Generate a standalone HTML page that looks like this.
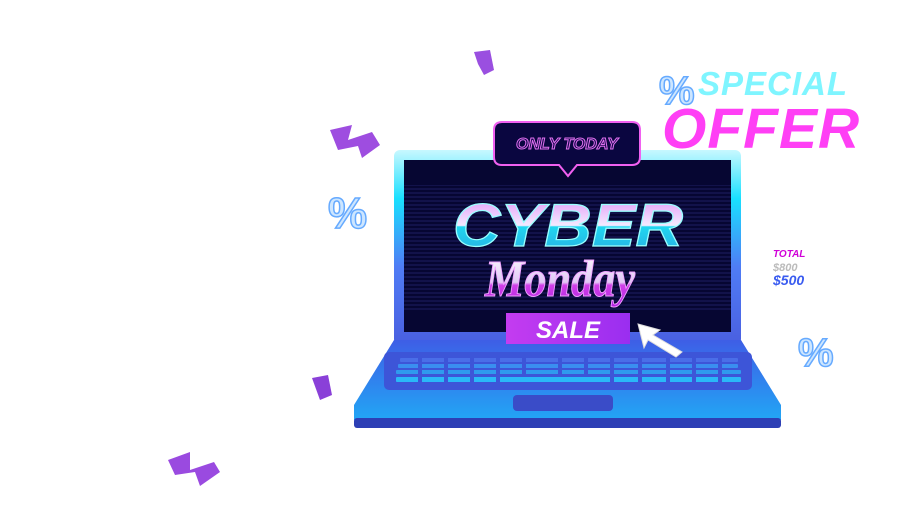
<!DOCTYPE html>
<html><head><meta charset="utf-8"><style>
body{margin:0;width:902px;height:507px;background:#fff;position:relative;overflow:hidden;font-family:"Liberation Sans",sans-serif}
.a{position:absolute}
</style></head><body>
<svg class="a" style="left:0;top:0" width="902" height="507">
<defs>
<linearGradient id="lid" x1="0" y1="0" x2="0" y2="1"><stop offset="0" stop-color="#c8f8ff"/><stop offset=".25" stop-color="#19e0ff"/><stop offset=".6" stop-color="#4f7cf5"/><stop offset="1" stop-color="#4a5fe0"/></linearGradient>
<linearGradient id="base" x1="0" y1="0" x2="0" y2="1"><stop offset="0" stop-color="#3e5ee6"/><stop offset="1" stop-color="#22a6f5"/></linearGradient>
<linearGradient id="cy" x1="0" y1="0" x2="0" y2="1"><stop offset="0" stop-color="#e08cf5"/><stop offset=".5" stop-color="#f3eaff"/><stop offset=".52" stop-color="#20d6f0"/><stop offset="1" stop-color="#2aa8e0"/></linearGradient>
<linearGradient id="mo" x1="0" y1="0" x2="0" y2="1"><stop offset="0" stop-color="#fff"/><stop offset=".55" stop-color="#e0c8f5"/><stop offset=".6" stop-color="#d040e8"/><stop offset="1" stop-color="#b020e0"/></linearGradient>
<linearGradient id="sale" x1="0" y1="0" x2="1" y2="0"><stop offset="0" stop-color="#c43cf0"/><stop offset="1" stop-color="#9a2ef0"/></linearGradient>
<pattern id="ln" width="4" height="4" patternUnits="userSpaceOnUse"><rect width="4" height="2" fill="#1a1a5a" opacity=".6"/></pattern>
</defs>
<rect x="394" y="150" width="347" height="195" rx="6" fill="url(#lid)"/>
<rect x="404" y="160" width="327" height="172" fill="#060632"/>
<rect x="404" y="185" width="327" height="125" fill="url(#ln)"/>
<path d="M394 340 L741 340 L781 405 L781 420 L354 420 L354 405 Z" fill="url(#base)"/>
<rect x="354" y="418" width="427" height="10" rx="3" fill="#2d3fb5"/>
<rect x="384" y="352" width="368" height="38" rx="5" fill="#3d55d8"/>
<g>
<rect x="400" y="358" width="338" height="4" rx="1" fill="#4a6ee8"/>
<rect x="398" y="364" width="340" height="4" rx="1" fill="#3a8ef0"/>
<rect x="396" y="370" width="345" height="4" rx="1" fill="#2ab8f8" opacity=".7"/>
<rect x="396" y="377" width="345" height="5" rx="1" fill="#2ab8f8"/>
</g>
<g stroke="#3d55d8" stroke-width="4">
<path d="M420 356V384M446 356V384M472 356V384M498 356V384M524 356V374M560 356V374M586 356V374M612 356V384M640 356V384M668 356V384M694 356V384M720 356V384"/>
</g>
<rect x="513" y="395" width="100" height="16" rx="4" fill="#3a4cc8"/>
<path d="M502 122 H632 Q640 122 640 130 V157 Q640 165 632 165 H577 L568 176 L559 165 H502 Q494 165 494 157 V130 Q494 122 502 122Z" fill="#0a0640" stroke="#f060f0" stroke-width="2"/>
<text x="567" y="149" text-anchor="middle" font-family="Liberation Sans" font-weight="bold" font-style="italic" font-size="16" fill="#1a0a50" stroke="#e070f0" stroke-width="1">ONLY TODAY</text>
<text x="568" y="246" text-anchor="middle" font-family="Liberation Sans" font-weight="bold" font-style="italic" font-size="60" fill="url(#cy)" stroke="#9ff" stroke-width="1.2" textLength="230" lengthAdjust="spacingAndGlyphs">CYBER</text>
<text x="560" y="296" text-anchor="middle" font-family="Liberation Serif" font-weight="bold" font-style="italic" font-size="52" fill="url(#mo)" stroke="#f0a0ff" stroke-width="1" textLength="150" lengthAdjust="spacingAndGlyphs">Monday</text>
<rect x="506" y="313" width="124" height="31" fill="url(#sale)"/>
<text x="568" y="338" text-anchor="middle" font-weight="bold" font-style="italic" font-size="24" fill="#fff">SALE</text>
<path d="M638 324 L660 330 L653 335 L682 352 L676 357 L648 340 L644 348 Z" fill="#fff" stroke="#ddd" stroke-width="1"/>
<path d="M474 52 L490 50 L494 70 L484 75 L478 64Z" fill="#9a4fe0"/>
<path d="M330 130 L352 125 L348 140 L372 132 L380 145 L362 158 L358 146 L338 150Z" fill="#9e4de0"/>
<path d="M312 378 L328 375 L332 395 L320 400Z" fill="#8a40d8"/>
<path d="M168 460 L190 452 L190 470 L214 462 L220 472 L200 486 L195 472 L175 475Z" fill="#9a4ae0"/>
<g font-weight="bold" fill="#cde6ff" stroke="#66aaff" stroke-width="1.5">
<text x="328" y="228" font-size="44">%</text><text x="798" y="366" font-size="40">%</text><text x="659" y="104" font-size="40">%</text>
</g>
</svg>
<div class="a" style="left:698px;top:65px;font:italic bold 33px 'Liberation Sans',sans-serif;color:#7ff5ff;letter-spacing:1px">SPECIAL</div>
<div class="a" style="left:662px;top:96px;font:italic 900 57px 'Liberation Sans',sans-serif;color:#ff3ff5;letter-spacing:1px">OFFER</div>
<div class="a" style="left:773px;top:249px;font:italic bold 10px 'Liberation Sans',sans-serif;color:#d000d8">TOTAL</div>
<div class="a" style="left:773px;top:262px;font:italic bold 11px 'Liberation Sans',sans-serif;color:#bbb">$800</div>
<div class="a" style="left:773px;top:272px;font:italic bold 14px 'Liberation Sans',sans-serif;color:#3a5cf0">$500</div>
</body></html>
